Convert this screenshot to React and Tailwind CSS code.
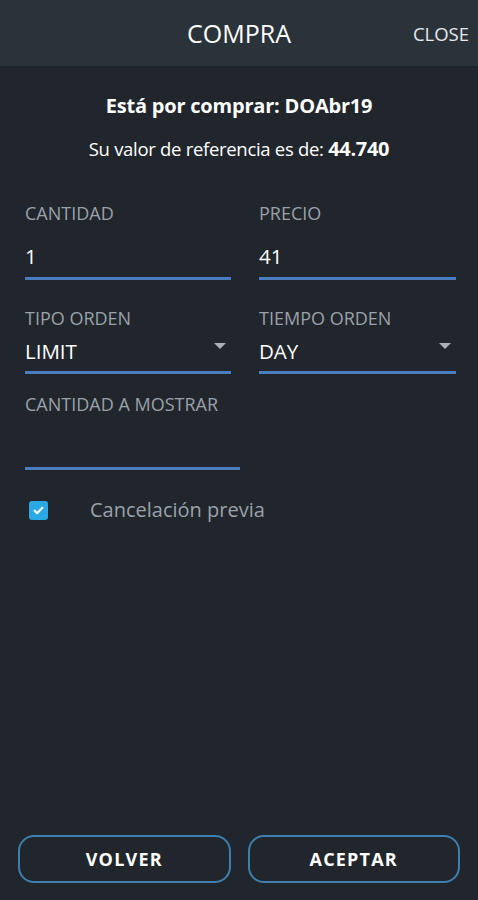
import React from 'react';

const font = { fontFamily: '"Open Sans", "Noto Sans", sans-serif' };

const Label = ({ children }) => (
  <span className="block text-[18px] leading-[20px] text-[#9aa1a8] whitespace-nowrap">{children}</span>
);

const Arrow = () => (
  <span className="absolute right-[5px] top-[15px] w-0 h-0 border-l-[6px] border-r-[6px] border-t-[6px] border-l-transparent border-r-transparent border-t-[#a9b0b7]" />
);

export default function App() {
  return (
    <div className="w-[478px] h-[900px] bg-[#21262d] flex flex-col" style={font}>
      <header className="h-[66px] bg-[#2b333a] flex items-center justify-center relative shrink-0">
        <span className="text-[25px] leading-[30px] text-white">COMPRA</span>
        <span className="absolute right-[9px] top-[21px] text-[18.5px] leading-[26px] text-[#e6e8ea]">CLOSE</span>
      </header>

      <div className="flex flex-col items-center mt-[26px]">
        <p className="h-[28px] text-[20px] font-bold text-white leading-[28px] tracking-[-0.2px]">Está por comprar: DOAbr19</p>
        <p className="h-[26px] text-[18.5px] text-white mt-[16px] leading-[26px] tracking-[-0.3px]">
          Su valor de referencia es de: <span className="font-bold text-[20px] leading-[26px]">44.740</span>
        </p>
      </div>

      <div className="px-[25px] mt-[41px] grid grid-cols-[206px_197px] gap-x-[28px]">
        <div>
          <Label>CANTIDAD</Label>
          <div className="h-[57px] flex items-end pb-[9px] border-b-[3px] border-[#4a7cc0]">
            <span className="text-[20.5px] leading-[24px] text-white">1</span>
          </div>
        </div>
        <div>
          <Label>PRECIO</Label>
          <div className="h-[57px] flex items-end pb-[9px] border-b-[3px] border-[#4a7cc0]">
            <span className="text-[20.5px] leading-[24px] text-white">41</span>
          </div>
        </div>

        <div className="mt-[28px]">
          <Label>TIPO ORDEN</Label>
          <div className="relative h-[46px] flex items-end pb-[8px] border-b-[3px] border-[#4a7cc0]">
            <span className="text-[20.5px] leading-[24px] text-white">LIMIT</span>
            <Arrow />
          </div>
        </div>
        <div className="mt-[28px]">
          <Label>TIEMPO ORDEN</Label>
          <div className="relative h-[46px] flex items-end pb-[8px] border-b-[3px] border-[#4a7cc0]">
            <span className="text-[20.5px] leading-[24px] text-white">DAY</span>
            <Arrow />
          </div>
        </div>
      </div>

      <div className="px-[25px] mt-[20px]">
        <div className="w-[215px]">
          <Label>CANTIDAD A MOSTRAR</Label>
          <div className="h-[56px] border-b-[3px] border-[#4a7cc0]" />
        </div>
      </div>

      <label className="flex items-center mt-[30px] pl-[29px]">
        <span className="w-[19px] h-[19px] rounded-[3px] bg-[#2aa9e4] flex items-center justify-center">
          <svg width="13" height="13" viewBox="0 0 24 24" fill="none" stroke="white" strokeWidth="4" strokeLinecap="round" strokeLinejoin="round">
            <path d="M5 12.5l4.5 4.5L19 7" />
          </svg>
        </span>
        <span className="ml-[42px] text-[20px] leading-[20px] text-[#9aa1a8]">Cancelación previa</span>
      </label>

      <div className="flex-1" />

      <div className="flex gap-[17px] px-[18px] mb-[17px]">
        <button className="flex-1 h-[48px] rounded-[16px] border-2 border-[#3d7fae] text-white font-bold text-[18px] tracking-[1.2px]">
          VOLVER
        </button>
        <button className="flex-1 h-[48px] rounded-[16px] border-2 border-[#3d7fae] text-white font-bold text-[18px] tracking-[1.2px]">
          ACEPTAR
        </button>
      </div>
    </div>
  );
}
